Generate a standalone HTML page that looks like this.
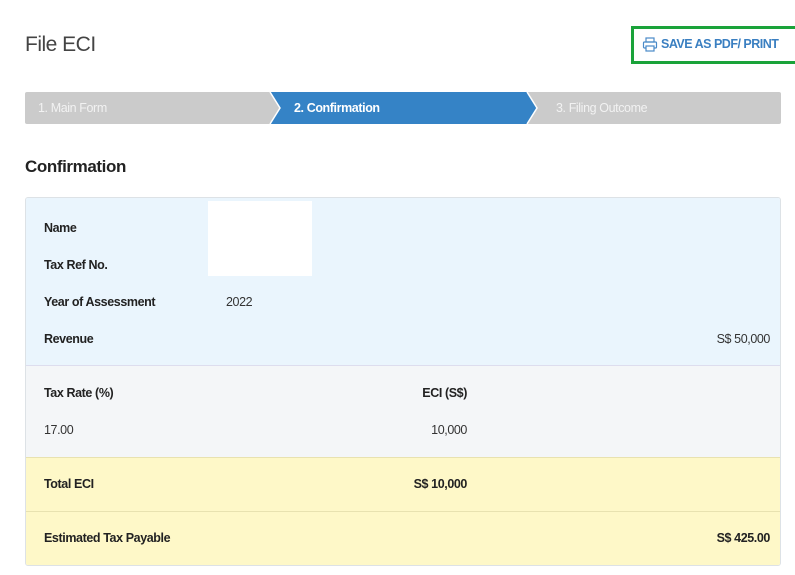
<!DOCTYPE html>
<html><head><style>
body{margin:0;width:795px;height:575px;background:#fff;font-family:"Liberation Sans",sans-serif;position:relative;overflow:hidden;color:#222}
.a{position:absolute}
.t{font-size:12.5px;letter-spacing:-0.4px;font-weight:bold;color:#222}
.n{font-size:12.5px;letter-spacing:-0.4px;color:#333}
</style></head><body>
<div class="a" style="left:25px;top:33px;font-size:21px;color:#444;letter-spacing:-0.5px">File ECI</div>
<div class="a" style="left:631px;top:26px;width:166px;height:32px;border:3px solid #1aa33a"></div>
<svg class="a" style="left:642px;top:37px" width="16" height="15" viewBox="0 0 16 15"><g fill="none" stroke="#4a8ac8" stroke-width="1.2"><rect x="4" y="1" width="8" height="4"/><rect x="1.5" y="5" width="13" height="6" rx="1"/><rect x="4" y="9" width="8" height="5" fill="#fff"/></g></svg>
<div class="a" style="left:661px;top:37px;font-size:12.5px;font-weight:bold;color:#3a7fc1;letter-spacing:-0.5px">SAVE AS PDF/ PRINT</div>
<svg class="a" style="left:25px;top:92px" width="756" height="32">
<rect x="0" y="0" width="756" height="32" rx="2" fill="#cbcbcb"/>
<polygon points="245,0 502,0 512,16 502,32 245,32 255,16" fill="#3583c6"/>
<polyline points="245,0 255,16 245,32" fill="none" stroke="#fff" stroke-width="1.5"/>
<polyline points="502,0 512,16 502,32" fill="none" stroke="#fff" stroke-width="1.5"/>
</svg>
<div class="a n" style="left:38px;top:101px;color:#f2f2f2">1. Main Form</div>
<div class="a t" style="left:294px;top:101px;color:#fff">2. Confirmation</div>
<div class="a n" style="left:556px;top:101px;color:#f2f2f2">3. Filing Outcome</div>
<div class="a" style="left:25px;top:157px;font-size:17px;font-weight:bold;letter-spacing:-0.4px">Confirmation</div>
<div class="a" style="left:25px;top:197px;width:754px;height:367px;border:1px solid #dde2e6;border-radius:3px;overflow:hidden">
<div class="a" style="left:0;top:0;width:754px;height:167px;background:#eaf5fd"></div>
<div class="a" style="left:0;top:167px;width:754px;height:91px;background:#f4f6f8;border-top:1px solid #dde"></div>
<div class="a" style="left:0;top:259px;width:754px;height:53px;background:#fef8c8;border-top:1px solid #e8e2b0"></div>
<div class="a" style="left:0;top:313px;width:754px;height:54px;background:#fef8c8;border-top:1px solid #e8e2b0"></div>
</div>
<div class="a" style="left:208px;top:201px;width:104px;height:75px;background:#fff"></div>
<div class="a t" style="left:44px;top:221px">Name</div>
<div class="a t" style="left:44px;top:258px">Tax Ref No.</div>
<div class="a t" style="left:44px;top:295px">Year of Assessment</div>
<div class="a n" style="left:226px;top:295px">2022</div>
<div class="a t" style="left:44px;top:332px">Revenue</div>
<div class="a n" style="right:25px;top:332px">S$ 50,000</div>
<div class="a t" style="left:44px;top:386px">Tax Rate (%)</div>
<div class="a t" style="right:328px;top:386px">ECI (S$)</div>
<div class="a n" style="left:44px;top:423px">17.00</div>
<div class="a n" style="right:328px;top:423px">10,000</div>
<div class="a t" style="left:44px;top:477px">Total ECI</div>
<div class="a t" style="right:328px;top:477px">S$ 10,000</div>
<div class="a t" style="left:44px;top:531px">Estimated Tax Payable</div>
<div class="a t" style="right:25px;top:531px">S$ 425.00</div>
</body></html>
